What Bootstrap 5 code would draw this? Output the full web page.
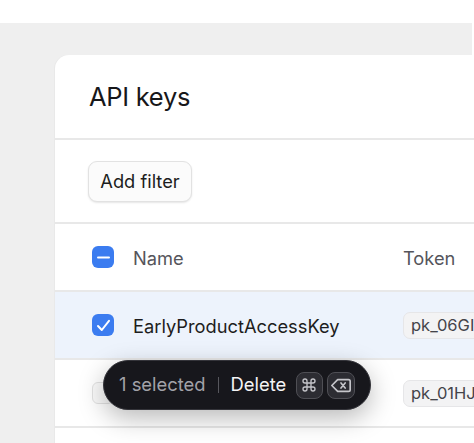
<!DOCTYPE html>
<html lang="en">
<head>
<meta charset="utf-8">
<title>API keys</title>
<link rel="stylesheet" href="https://cdn.jsdelivr.net/npm/bootstrap@5.3.0/dist/css/bootstrap.min.css">
<style>
html,body{margin:0;height:443px;overflow:hidden;background:#fff;font-family:Inter,"Liberation Sans",sans-serif;}
.stage{height:443px;padding-top:23px;position:relative;overflow:hidden;}
.panel{background:#efefef;height:420px;width:472px;padding:32px 0 0 55px;}
.sheet{background:#fff;width:419px;height:388px;border-radius:14px 0 0 0;box-shadow:-1px 0 0 #e9e9e9;}
.head-row{height:85px;padding:2px 0 0 34px;border-bottom:2px solid #e8e8e8;font-size:25.5px;color:#17171a;letter-spacing:-.3px;}
.filter-row{height:84px;padding-left:33px;border-bottom:2px solid #e8e8e8;}
.filter-btn{height:41px;width:104px;padding:2px 0 0;font-size:18.3px;color:#1d1d20;background:#fbfbfb;border:1.5px solid #e2e2e2;border-radius:9px;box-shadow:0 1px 2px rgba(0,0,0,.1);}
.data-row{height:68px;padding-left:37px;border-bottom:2px solid #e8e8e8;font-size:18.3px;color:#1d1d20;white-space:nowrap;overflow:hidden;}
.data-row.tinted{background:#edf3fc;}
.data-row.titles{color:#55555b;}
.tick-box{width:22px;height:22px;border-radius:6px;background:#3b7cf0;flex:none;margin-right:19px;}
.tick-empty{background:#fafafa;border:1.5px solid #e2e2e2;}
.col-name{width:270px;flex:none;padding-top:3px;}
.col-token{padding-top:3px;}
.token{background:#f3f3f4;border:1.5px solid #e6e6e8;border-radius:7px;font-size:16.5px;color:#44444a;height:27px;padding:0 7px;flex:none;margin-bottom:-1px;}
.tools{position:absolute;left:103px;top:360px;width:268px;height:50px;background:#17171c;border:1.5px solid #34343a;border-radius:25px;box-shadow:0 8px 26px rgba(0,0,0,.28);padding-left:15px;font-size:18.4px;white-space:nowrap;}
.count{color:#a2a2a8;}
.sep{width:1px;height:16px;background:#57575d;margin:0 12px;}
.del{color:#f4f4f5;margin-right:9.5px;}
.key-cap{width:27px;height:27px;border:1.5px solid #4f4f55;background:#2c2c32;border-radius:8px;color:#c5c5ca;margin-right:4px;}
.key-wide{width:28px;}
</style>
</head>
<body>
<div class="stage">
  <div class="panel">
    <div class="sheet">
      <div class="head-row d-flex align-items-center">API keys</div>
      <div class="filter-row d-flex align-items-center"><button type="button" class="btn filter-btn">Add filter</button></div>
      <div class="data-row titles d-flex align-items-center">
        <span class="tick-box d-flex align-items-center justify-content-center"><svg width="15" height="15" viewBox="0 0 15 15"><path d="M2 7.5h11" stroke="#fff" stroke-width="2" stroke-linecap="round"/></svg></span>
        <span class="col-name">Name</span><span class="col-token">Token</span>
      </div>
      <div class="data-row tinted d-flex align-items-center">
        <span class="tick-box d-flex align-items-center justify-content-center"><svg width="17" height="17" viewBox="0 0 17 17" fill="none"><path d="M3 9l3.8 4L14 3.8" stroke="#fff" stroke-width="2" stroke-linecap="round" stroke-linejoin="round"/></svg></span>
        <span class="col-name">EarlyProductAccessKey</span><span class="token d-flex align-items-center">pk_06GI</span>
      </div>
      <div class="data-row d-flex align-items-center">
        <span class="tick-box tick-empty"></span>
        <span class="col-name"></span><span class="token d-flex align-items-center">pk_01HJ</span>
      </div>
    </div>
  </div>
  <div class="tools d-flex align-items-center">
    <span class="count">1 selected</span><span class="sep"></span><span class="del">Delete</span>
    <span class="key-cap d-flex align-items-center justify-content-center"><svg width="16" height="16" viewBox="0 0 24 24" fill="none" stroke="currentColor" stroke-width="2"><path d="M15 6v12a3 3 0 1 0 3-3H6a3 3 0 1 0 3 3V6a3 3 0 1 0-3 3h12a3 3 0 1 0-3-3"/></svg></span>
    <span class="key-cap key-wide d-flex align-items-center justify-content-center"><svg width="20" height="15" viewBox="0 0 24 18" fill="none" stroke="currentColor" stroke-width="2" stroke-linejoin="round" stroke-linecap="round"><path d="M8 2h13a2 2 0 0 1 2 2v10a2 2 0 0 1-2 2H8l-7-7z"/><path d="M17 6l-5 6M12 6l5 6"/></svg></span>
  </div>
</div>
</body>
</html>
